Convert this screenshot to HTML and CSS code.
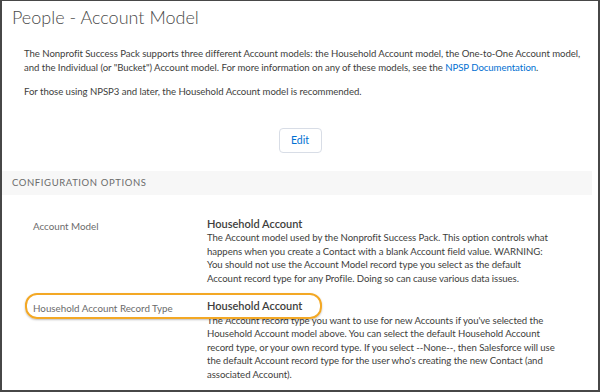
FILE: index.html
```html
<!DOCTYPE html>
<html lang="en">
    <head>
        <meta charset="UTF-8" />
        <meta name="viewport" content="width=device-width, initial-scale=1.0" />
        <title>People - Account Model</title>
        <link rel="stylesheet" href="styles.css">
    </head>
    <body>
        <div class="frame">
            <h1 class="page-title">People - Account Model</h1>

            <div class="intro">
                <p>The Nonprofit Success Pack supports three different Account models: the Household Account model, the One-to-One Account model, and the Individual (or "Bucket") Account model. For more information on any of these models, see the <a href="#">NPSP Documentation</a>.</p>
                <p>For those using NPSP3 and later, the Household Account model is recommended.</p>
            </div>

            <div class="actions">
                <button class="btn">Edit</button>
            </div>

            <h2 class="section-head">Configuration Options</h2>

            <dl class="settings">
                <div class="setting">
                    <dt>Account Model</dt>
                    <dd>
                        <strong>Household Account</strong>
                        <span>The Account model used by the Nonprofit Success Pack. This option controls what happens when you create a Contact with a blank Account field value. WARNING: You should not use the Account Model record type you select as the default Account record type for any Profile. Doing so can cause various data issues.</span>
                    </dd>
                </div>
                <div class="setting marked">
                    <dt>Household Account Record Type</dt>
                    <dd>
                        <strong>Household Account</strong>
                        <span>The Account record type you want to use for new Accounts if you've selected the Household Account model above. You can select the default Household Account record type, or your own record type. If you select --None--, then Salesforce will use the default Account record type for the user who's creating the new Contact (and associated Account).</span>
                    </dd>
                </div>
            </dl>
        </div>
    </body>
</html>
```

FILE: styles.css
```css
* {
    box-sizing: border-box;
}

html,
body {
    margin: 0;
    padding: 0;
    background: #fff;
}

body {
    font-family: Lato, "Open Sans", sans-serif;
    color: #3e3e3c;
}

.frame {
    width: 600px;
    height: 392px;
    overflow: hidden;
    border: 2px solid #474747;
    border-top-width: 1px;
    padding-right: 6px;
}

.page-title {
    margin: 0;
    padding: 5px 0 0 10px;
    font-size: 18px;
    font-weight: 300;
    line-height: 22px;
    color: #4a4a4a;
}

.intro {
    padding: 19px 0 0 22px;
}

.intro p {
    margin: 0 0 11px;
    font-size: 9.6px;
    line-height: 13.5px;
    letter-spacing: -0.05px;
}

.intro a {
    color: #0070d2;
    text-decoration: none;
}

.actions {
    display: flex;
    justify-content: center;
    padding: 18px 0 18px 6px;
}

.btn {
    width: 43px;
    height: 25px;
    border: 1px solid #d8dde6;
    border-radius: 4px;
    background: #fff;
    color: #0070d2;
    font-family: inherit;
    font-size: 10.5px;
    padding: 0;
}

.section-head {
    margin: 0;
    height: 24px;
    line-height: 24px;
    padding-left: 10px;
    background: #f7f7f7;
    font-size: 9.5px;
    font-weight: 400;
    letter-spacing: 0.6px;
    text-transform: uppercase;
    color: #6b6b6b;
}

.settings {
    margin: 0;
    padding: 22px 0 0 31px;
}

.setting {
    position: relative;
    display: grid;
    grid-template-columns: 174px 350px;
    margin-bottom: 14px;
}

.setting dt {
    font-size: 9.8px;
    color: #6b6b6b;
    padding-top: 3px;
}

.setting dd {
    margin: 0;
    font-size: 9.6px;
    line-height: 13.5px;
    letter-spacing: -0.05px;
}

.setting strong {
    display: block;
    font-size: 11px;
    font-weight: 600;
    margin-bottom: 1px;
    letter-spacing: 0;
    color: #3e3e3c;
}

/* annotation ring around the second label */
.setting.marked::before {
    content: "";
    position: absolute;
    left: -8px;
    top: -6px;
    width: 293px;
    height: 22px;
    border: 2px solid #f3a825;
    border-radius: 12px;
    box-shadow: 0 1px 2px rgb(0 0 0 / 0.25);
}
```
